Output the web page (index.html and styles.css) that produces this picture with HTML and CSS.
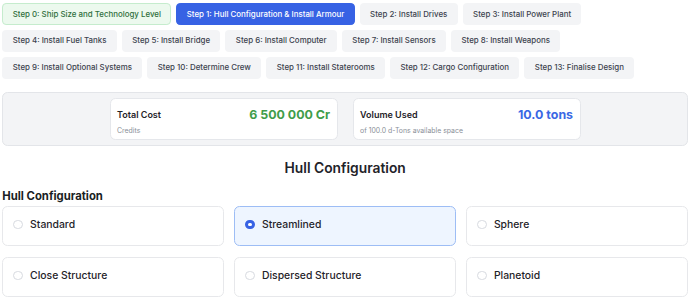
FILE: index.html
```html
<!DOCTYPE html>
<html lang="en">
<head>
<meta charset="utf-8">
<title>Ship Designer</title>
<link rel="stylesheet" href="styles.css">
</head>
<body>
<div class="page">
  <nav class="steps">
    <button class="step step-done">Step 0: Ship Size and Technology Level</button>
    <button class="step step-active">Step 1: Hull Configuration &amp; Install Armour</button>
    <button class="step">Step 2: Install Drives</button>
    <button class="step">Step 3: Install Power Plant</button>
    <button class="step">Step 4: Install Fuel Tanks</button>
    <button class="step">Step 5: Install Bridge</button>
    <button class="step">Step 6: Install Computer</button>
    <button class="step">Step 7: Install Sensors</button>
    <button class="step">Step 8: Install Weapons</button>
    <button class="step">Step 9: Install Optional Systems</button>
    <button class="step">Step 10: Determine Crew</button>
    <button class="step">Step 11: Install Staterooms</button>
    <button class="step">Step 12: Cargo Configuration</button>
    <button class="step">Step 13: Finalise Design</button>
  </nav>

  <section class="summary">
    <div class="summary-grid">
      <div class="stat">
        <div class="stat-row">
          <span class="stat-title">Total Cost</span>
          <span class="stat-value value-green">6 500 000 Cr</span>
        </div>
        <div class="stat-sub">Credits</div>
      </div>
      <div class="stat">
        <div class="stat-row">
          <span class="stat-title">Volume Used</span>
          <span class="stat-value value-blue">10.0 tons</span>
        </div>
        <div class="stat-sub">of 100.0 d-Tons available space</div>
      </div>
    </div>
  </section>

  <h1 class="page-title">Hull Configuration</h1>
  <h2 class="group-title">Hull Configuration</h2>

  <div class="options">
    <label class="option"><input type="radio" name="hull" class="radio"><span>Standard</span></label>
    <label class="option option-selected"><input type="radio" name="hull" class="radio" checked><span>Streamlined</span></label>
    <label class="option"><input type="radio" name="hull" class="radio"><span>Sphere</span></label>
    <label class="option"><input type="radio" name="hull" class="radio"><span>Close Structure</span></label>
    <label class="option"><input type="radio" name="hull" class="radio"><span>Dispersed Structure</span></label>
    <label class="option"><input type="radio" name="hull" class="radio"><span>Planetoid</span></label>
  </div>
</div>
</body>
</html>
```

FILE: styles.css
```css
* { box-sizing: border-box; }

html, body {
  margin: 0;
  padding: 0;
  background: #ffffff;
}

body {
  font-family: Inter, "Noto Sans", "Liberation Sans", sans-serif;
  color: #1f2329;
}

.page {
  padding: 3.3px 2px 0 2.3px;
}

.steps {
  display: flex;
  flex-wrap: wrap;
  gap: 4.7px 5px;
}

.step {
  height: 22px;
  padding: 0 9.4px;
  border: 1px solid transparent;
  border-radius: 4.1px;
  background: #f3f4f6;
  color: #3c434e;
  font-family: inherit;
  font-size: 7.9px;
  font-weight: 500;
  line-height: 11px;
  cursor: pointer;
}

.step-done {
  background: #ecf9ee;
  border-color: #c5eccd;
  color: #2f6f3d;
}

.step-active {
  background: #3762e4;
  border-color: #3762e4;
  color: #ffffff;
}

.summary {
  margin-top: 13.6px;
  padding: 5px;
  background: #f3f4f6;
  border: 1px solid #e3e5e9;
  border-radius: 5.5px;
}

.summary-grid {
  display: grid;
  grid-template-columns: 228px 228px;
  gap: 15px;
  justify-content: center;
}

.stat {
  background: #ffffff;
  border: 1px solid #e5e7eb;
  border-radius: 5.5px;
  padding: 6.5px 6.6px 5.5px 6.4px;
  height: 41.7px;
}

.stat-row {
  display: flex;
  align-items: center;
  justify-content: space-between;
  height: 17px;
}

.stat-title {
  font-size: 9px;
  font-weight: 600;
  color: #1f2329;
}

.stat-value {
  font-size: 12.4px;
  font-weight: 700;
}

.value-green { color: #3f9d4a; }
.value-blue { color: #3a68e4; }

.stat-sub {
  margin-top: 3px;
  font-size: 6.9px;
  line-height: 10px;
  color: #8a8f98;
}

.page-title {
  margin: 13.5px 0 0;
  text-align: center;
  font-size: 13.8px;
  line-height: 19px;
  font-weight: 600;
  color: #1f2329;
}

.group-title {
  margin: 11px 0 0;
  font-size: 11.3px;
  line-height: 15px;
  font-weight: 700;
  color: #1a1e24;
}

.options {
  margin-top: 1.2px;
  display: grid;
  grid-template-columns: repeat(3, 1fr);
  gap: 10.4px 10px;
}

.option {
  display: flex;
  align-items: center;
  height: 40.6px;
  padding: 0 10px 2.6px 10.2px;
  border: 1px solid #e7e8eb;
  border-radius: 5.5px;
  background: #ffffff;
  font-size: 10.4px;
  font-weight: 500;
  color: #1f2329;
  cursor: pointer;
}

.option-selected {
  background: #eef5ff;
  border-color: #9dbdf5;
}

.radio {
  appearance: none;
  -webkit-appearance: none;
  margin: 0 7px 0 0;
  width: 9.6px;
  height: 9.6px;
  flex: none;
  border: 1px solid #d7dae0;
  border-radius: 50%;
  background: #ffffff;
}

.radio:checked {
  border: 3px solid #3762e4;
  background: #ffffff;
}
```
